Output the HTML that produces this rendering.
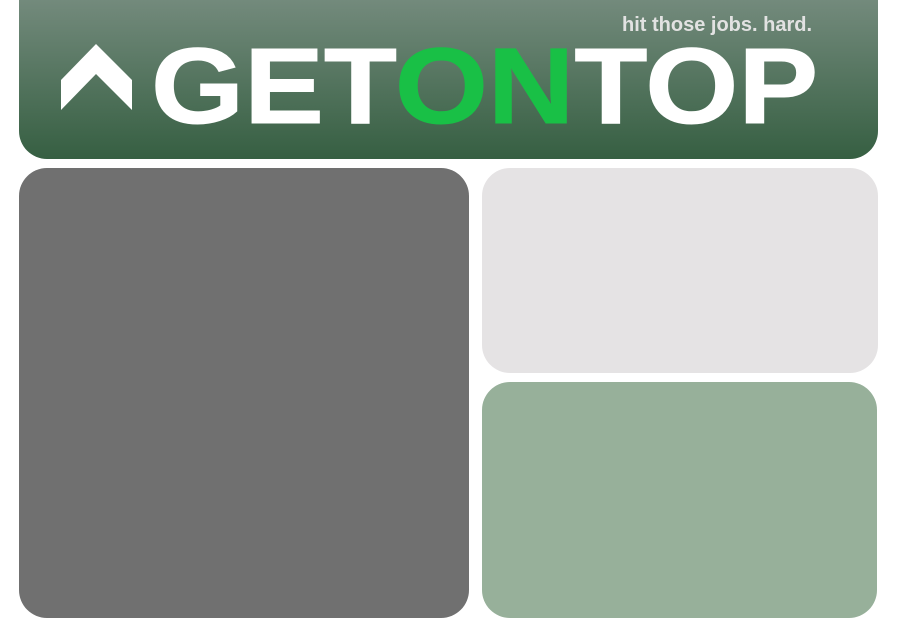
<!DOCTYPE html>
<html><head><style>
body{margin:0;width:900px;height:640px;background:#fff;position:relative;overflow:hidden;font-family:"Liberation Sans",Arial,sans-serif}
.hd{position:absolute;left:19px;top:0;width:859px;height:159px;border-radius:0 0 28px 28px;background:linear-gradient(#738a7c,#365f42)}
.logo{position:absolute;left:151px;top:16px;font-size:108px;font-weight:bold;color:#fff;letter-spacing:0;line-height:140px;white-space:nowrap;transform:scaleX(1.108);transform-origin:0 0;-webkit-text-stroke:1px #fff}
.logo span{color:#19c046;-webkit-text-stroke:1px #19c046}
.tag{position:absolute;left:622px;top:14px;font-size:20px;font-weight:bold;color:#e2e2e2;white-space:nowrap}
.p{position:absolute;border-radius:28px}
</style></head><body>
<div class="hd"></div>
<svg style="position:absolute;left:0;top:0" width="200" height="160"><polygon points="61,80 96,44 132,80 132,110 96,74 61,110" fill="#fff"/></svg>
<div class="logo">GET<span>ON</span>TOP</div>
<div class="tag">hit those jobs. hard.</div>
<div class="p" style="left:19px;top:168px;width:450px;height:450px;background:#707070"></div>
<div class="p" style="left:482px;top:168px;width:396px;height:205px;background:#e5e3e4"></div>
<div class="p" style="left:482px;top:382px;width:395px;height:236px;background:#97b09a"></div>
</body></html>
